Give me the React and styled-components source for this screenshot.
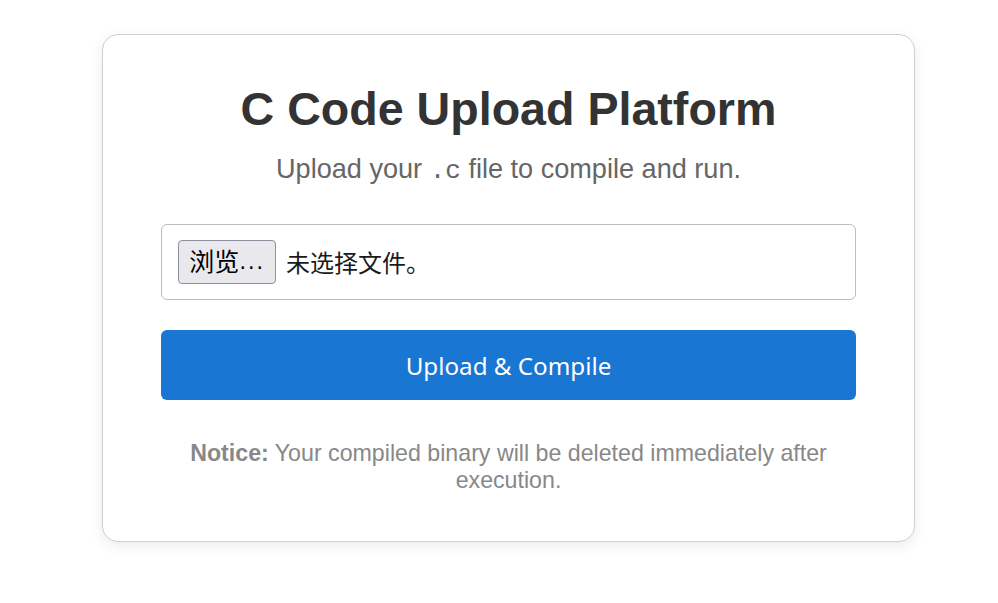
import React from "react";
import styled, { createGlobalStyle } from "styled-components";

const Global = createGlobalStyle`
  html, body { margin: 0; padding: 0; background: #ffffff; }
  body { font-family: "Liberation Sans", Arial, sans-serif; }
  * { box-sizing: border-box; }
`;

const Page = styled.div`
  padding: 34px 84px 40px 102px;
`;

const Card = styled.main`
  width: 813px;
  border: 1px solid #d0d0d0;
  border-radius: 16px;
  box-shadow: 0 4px 14px rgba(0, 0, 0, 0.08);
  background: #fff;
  padding: 48px 58px 47px;
  display: flex;
  flex-direction: column;
  align-items: stretch;
  text-align: center;
`;

const Title = styled.h1`
  margin: 0;
  font-size: 46.6px;
  line-height: 53px;
  font-weight: 700;
  color: #333333;
`;

const Subtitle = styled.p`
  margin: 17px 0 0;
  font-size: 27.1px;
  line-height: 31px;
  color: #666666;
`;

const Code = styled.code`
  font-family: "Liberation Mono", "Courier New", monospace;
  font-size: 26px;
  color: inherit;
`;

const FileBox = styled.label`
  margin-top: 37px;
  height: 76px;
  border: 1px solid #bdbdbd;
  border-radius: 6px;
  padding: 0 16px;
  display: flex;
  align-items: center;
  gap: 10px;
  font-family: "Noto Sans CJK SC", "Noto Sans", sans-serif;
  font-size: 24px;
  color: #1b1b1b;
  cursor: pointer;
`;

const HiddenInput = styled.input`
  display: none;
`;

const BrowseButton = styled.span`
  height: 44px;
  width: 98px;
  padding: 0 8px;
  display: inline-flex;
  align-items: center;
  justify-content: center;
  background: #e9e9ed;
  border: 1px solid #8f8f9d;
  border-radius: 4px;
  color: #000;
  line-height: 1;
  font-family: "DejaVu Sans", "Noto Sans CJK SC", sans-serif;
  font-size: 25px;
`;

const Dots = styled.span`
  font-family: "DejaVu Sans", sans-serif;
  font-size: 22px;
  letter-spacing: 1.5px;
`;

const FileName = styled.span`
  line-height: 1;
`;

const SubmitButton = styled.button`
  margin-top: 30px;
  height: 70px;
  border: none;
  border-radius: 6px;
  background: #1976d2;
  color: #ffffff;
  font-family: "Noto Sans", "Open Sans", sans-serif;
  font-size: 24.2px;
  cursor: pointer;
`;

const Notice = styled.p`
  margin: 40px 0 0;
  font-size: 23.2px;
  line-height: 27px;
  color: #888888;
  padding: 0 20px;
`;

export default function App() {
  return (
    <>
      <Global />
      <Page>
        <Card>
          <Title>C Code Upload Platform</Title>
          <Subtitle>
            Upload your <Code>.c</Code> file to compile and run.
          </Subtitle>
          <FileBox>
            <HiddenInput type="file" accept=".c" />
            <BrowseButton>
              浏览<Dots>...</Dots>
            </BrowseButton>
            <FileName>未选择文件。</FileName>
          </FileBox>
          <SubmitButton type="button">Upload &amp; Compile</SubmitButton>
          <Notice>
            <strong>Notice:</strong> Your compiled binary will be deleted immediately after execution.
          </Notice>
        </Card>
      </Page>
    </>
  );
}
